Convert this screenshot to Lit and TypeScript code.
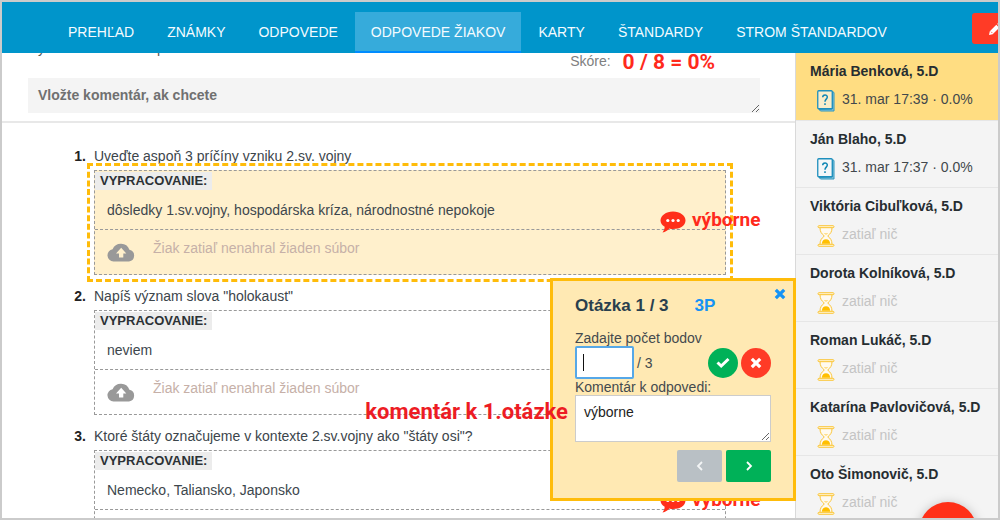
import { LitElement, html, css, svg, nothing } from "lit";
import { customElement, property } from "lit/decorators.js";
import { classMap } from "lit/directives/class-map.js";

interface Student {
  name: string;
  meta?: string;
}

interface Question {
  title: string;
  answer: string;
  upload?: string;
  note?: string;
}

const NAV = ["PREHĽAD", "ZNÁMKY", "ODPOVEDE", "ODPOVEDE ŽIAKOV", "KARTY", "ŠTANDARDY", "STROM ŠTANDARDOV"];

const STUDENTS: Student[] = [
  { name: "Mária Benková, 5.D", meta: "31. mar 17:39 · 0.0%" },
  { name: "Ján Blaho, 5.D", meta: "31. mar 17:37 · 0.0%" },
  { name: "Viktória Cibuľková, 5.D" },
  { name: "Dorota Kolníková, 5.D" },
  { name: "Roman Lukáč, 5.D" },
  { name: "Katarína Pavlovičová, 5.D" },
  { name: "Oto Šimonovič, 5.D" },
];

const QUESTIONS: Question[] = [
  {
    title: "Uveďte aspoň 3 príčíny vzniku 2.sv. vojny",
    answer: "dôsledky 1.sv.vojny, hospodárska kríza, národnostné nepokoje",
    upload: "Žiak zatiaľ nenahral žiaden súbor",
    note: "výborne",
  },
  {
    title: 'Napíš význam slova "holokaust"',
    answer: "neviem",
    upload: "Žiak zatiaľ nenahral žiaden súbor",
  },
  {
    title: 'Ktoré štáty označujeme v kontexte 2.sv.vojny ako "štáty osi"?',
    answer: "Nemecko, Taliansko, Japonsko",
    note: "výborne",
  },
];

const cloudIcon = svg`<svg width="28" height="20" viewBox="0 0 28 20" aria-hidden="true">
  <path fill="#999" fill-rule="evenodd" d="M6.500 19.500A6.200 6.200 0 0 1 5.600 7.200A9 9 0 0 1 22.400 7.700A6 6 0 0 1 22 19.500ZM12 15.500h4.300v-4h3L14.200 5.800L9 11.500h3Z"/></svg>`;

const bubbleIcon = svg`<svg width="26" height="22" viewBox="0 0 26 22" aria-hidden="true">
  <path fill="#ff2f1a" d="M13 .5C20 .5 25.500 4.500 25.500 9.500S20 18 13 18C11.500 18 10.500 17.900 9.300 17.500C7.500 19.500 5.500 21 2.500 21.500C4 19.500 4.500 18 4.700 15.800C2 14 .5 12 .5 9.500C.5 4.500 6 .5 13 .5Z"/>
  <g fill="#fff"><circle cx="7.800" cy="9.500" r="1.600"/><circle cx="13" cy="9.500" r="1.600"/><circle cx="18.200" cy="9.500" r="1.600"/></g></svg>`;

const bookIcon = svg`<svg width="18" height="22" viewBox="0 0 18 22" aria-hidden="true">
  <path d="M2 19.500L3.500 21H17V2.500L15.500 1.500V19Z" fill="#8cc6dc" stroke="#2d97bf"/>
  <rect x=".75" y=".75" width="14.500" height="18" rx="1" fill="#f4f9fb" fill-opacity=".6" stroke="#1e8fbd" stroke-width="1.300"/>
  <path d="M5.700 7.200C5.800 4.200 10.300 4.200 10.300 7.100C10.300 9.100 8 9.200 8 11.700M8 13.200v1.700" fill="none" stroke="#0f86b5" stroke-width="1.500"/></svg>`;

const hourglassIcon = svg`<svg width="18" height="22" viewBox="0 0 18 22" aria-hidden="true">
  <g fill="#fff6d8" stroke="#fbc638">
  <path d="M3 2.500C3 7 4.500 8.500 7.300 11C4.500 13.500 3 15 3 19.500H15C15 15 13.500 13.500 10.700 11C13.500 8.500 15 7 15 2.500Z" fill="#fffaf0"/>
  <rect x="1" y=".7" width="16" height="2" rx="1"/><rect x="1" y="19.300" width="16" height="2" rx="1"/></g>
  <path d="M4.800 18.700C5 15.800 6.800 14.300 9 14.300S13 15.800 13.200 18.700Z" fill="#ffbf00"/>
  <path d="M7.500 8.500Q9 9.700 10.500 8.500" fill="none" stroke="#ffcf4a"/></svg>`;

const cross = (color: string, size: number) => svg`<svg width=${size} height=${size} viewBox="0 0 10 10" aria-hidden="true">
  <path d="M1.500 1.500L8.500 8.500M8.500 1.500L1.500 8.500" stroke=${color} stroke-width="2.700"/></svg>`;

@customElement("nav-bar")
export class NavBar extends LitElement {
  static styles = css`
    :host { display: flex; align-items: flex-end; justify-content: space-between; height: 51px; background: #0095cb; position: relative; z-index: 5; }
    .tabs { display: flex; gap: 1px; padding-left: 50px; }
    .tab { box-sizing: border-box; height: 41px; padding: 0 16px; line-height: 40px; color: #f4fbff; text-decoration: none; white-space: nowrap; }
    .tab.active { background: #36abdb; border-bottom: 2px solid #008cff; }
    .edit { align-self: flex-start; margin-top: 11px; width: 26px; height: 31px; padding: 0 0 0 16px; border: 0; border-radius: 3px 0 0 3px; background: #ff3b26; overflow: hidden; display: flex; align-items: center; }
    .edit svg { flex: none; }
  `;
  render() {
    return html`
      <nav class="tabs">
        ${NAV.map((t) => html`<a class=${classMap({ tab: true, active: t === "ODPOVEDE ŽIAKOV" })} href="#">${t}</a>`)}
      </nav>
      <button class="edit" aria-label="Upraviť">
        <svg width="14" height="14" viewBox="0 0 14 14" aria-hidden="true">
          <path fill="#fff" d="M1 13L1.800 9.300L8.300 2.800L11.200 5.700L4.700 12.200ZM9.200 1.900L10.500 .6Q11.200 0 11.900 .6L13.400 2.100Q14 2.800 13.400 3.500L12.100 4.800Z"/>
          <path d="M3 9.700L4.400 11.100" stroke="#ff3b26" stroke-width=".8"/>
        </svg>
      </button>
    `;
  }
}

@customElement("question-item")
export class QuestionItem extends LitElement {
  @property({ attribute: false }) question!: Question;
  @property({ type: Number }) number = 1;
  @property({ type: Boolean }) current = false;

  static styles = css`
    :host { display: grid; grid-template-columns: 20px 1fr; column-gap: 8px; line-height: 20px; }
    .number { text-align: right; font-weight: bold; color: #222; }
    .title { color: #3c454b; }
    .box { grid-column: 2; position: relative; box-sizing: border-box; height: 105px; margin-top: 4px; border: 1px dashed #999; }
    .box.current { background: #fff0cc; outline: 3px dashed #ffbc0a; outline-offset: 4px; }
    .label { display: block; width: fit-content; margin: 1px 0 0; padding: 0 5px; line-height: 18px; font-size: 13px; font-weight: bold; color: #2b3135; background: #ececec; }
    .answer { margin: 0; padding: 10px 12px 9px; color: #3d474d; border-bottom: 1px dashed #999; }
    .upload { display: flex; gap: 18px; padding: 8px 12px; color: #c6b0a8; }
    .upload svg { margin-top: 4px; }
    .note { position: absolute; left: calc(100% - 65px); top: 40px; display: flex; gap: 6px; white-space: nowrap; font: bold 19px/18px Roboto, sans-serif; color: #ff2a1c; }
  `;
  render() {
    const q = this.question;
    return html`
      <span class="number">${this.number}.</span>
      <span class="title">${q.title}</span>
      <div class=${classMap({ box: true, current: this.current })}>
        <span class="label">VYPRACOVANIE:</span>
        <p class="answer">${q.answer}</p>
        ${q.upload ? html`<div class="upload">${cloudIcon}<span>${q.upload}</span></div>` : nothing}
        ${q.note ? html`<div class="note">${bubbleIcon}<span>${q.note}</span></div>` : nothing}
      </div>
    `;
  }
}

@customElement("grade-panel")
export class GradePanel extends LitElement {
  static styles = css`
    :host { display: block; box-sizing: border-box; width: 246px; padding: 12px 22px 16px; border: 3px solid #ffbc0a; background: #ffe9b3; color: #444a4e; }
    .title { margin: 0 0 11px; display: flex; gap: 26px; font-size: 17px; line-height: 26px; color: #293f4e; }
    .points { color: #1593f5; }
    .close { position: absolute; top: 5px; right: 5px; padding: 2px; border: 0; background: none; display: flex; }
    .label { display: block; line-height: 16px; }
    .row { display: flex; align-items: center; gap: 3px; height: 33px; }
    .field { position: relative; display: flex; }
    .score { box-sizing: border-box; width: 59px; height: 33px; border: 2px solid #56a8e8; border-radius: 2px; padding: 0 7px; background: #fff; font: inherit; outline: 0; }
    .caret { position: absolute; left: 8px; top: 8px; width: 1px; height: 17px; background: #111; }
    .max { flex: 1; }
    .round { width: 30px; height: 30px; border: 0; border-radius: 50%; padding: 0; display: flex; align-items: center; justify-content: center; }
    .yes, .next { background: #00b158; }
    .no { background: #ff3b26; }
    .comment { display: block; box-sizing: border-box; width: 100%; height: 47px; padding: 8px; border: 1px solid #ccc; background: #fff; font: inherit; line-height: 16px; color: #222; outline: 0; resize: vertical; }
    .pager { display: flex; justify-content: flex-end; gap: 4px; margin-top: 8px; }
    .step { width: 45px; height: 32px; padding: 0; border: 0; border-radius: 2px; display: flex; align-items: center; justify-content: center; }
    .prev { background: #b9c0c5; }
    .hint { position: absolute; right: 225px; top: 119px; white-space: nowrap; font: bold 22px/24px Roboto, sans-serif; color: #ed1c24; }
  `;
  render() {
    return html`
      <h2 class="title"><span>Otázka 1 / 3</span><span class="points">3P</span></h2>
      <button class="close" aria-label="Zavrieť">${cross("#1593f5", 12)}</button>
      <label class="label" for="score">Zadajte počet bodov</label>
      <div class="row">
        <span class="field"><input class="score" id="score" type="text" /><span class="caret"></span></span>
        <span class="max">/ 3</span>
        <button class="round yes" aria-label="Správne">
          <svg width="14" height="12" viewBox="0 0 14 12" aria-hidden="true"><path d="M1.500 5.500L5.200 9L12.500 2" fill="none" stroke="#fff" stroke-width="3"/></svg>
        </button>
        <button class="round no" aria-label="Nesprávne">${cross("#fff", 12)}</button>
      </div>
      <label class="label" for="comment">Komentár k odpovedi:</label>
      <textarea class="comment" id="comment" .value=${"výborne"}></textarea>
      <div class="pager">
        <button class="step prev" aria-label="Predchádzajúca">
          <svg width="8" height="10" viewBox="0 0 8 10" aria-hidden="true"><path d="M6 1L2 5L6 9" fill="none" stroke="#f3f5f6" stroke-width="1.800"/></svg>
        </button>
        <button class="step next" aria-label="Ďalšia">
          <svg width="8" height="10" viewBox="0 0 8 10" aria-hidden="true"><path d="M2 1L6 5L2 9" fill="none" stroke="#fff" stroke-width="1.800"/></svg>
        </button>
      </div>
      <div class="hint">komentár k 1.otázke</div>
    `;
  }
}

@customElement("student-list")
export class StudentList extends LitElement {
  static styles = css`
    :host { display: block; border-left: 1px solid #d9d9d9; background: #f4f4f4; }
    .list { margin: 0; padding: 0; list-style: none; }
    .item { box-sizing: border-box; height: 67px; padding: 8px 0 0 14px; border-bottom: 1px solid #e6e6e6; white-space: nowrap; }
    .item.selected { height: 68px; background: #ffdd82; }
    .name { line-height: 20px; font-weight: bold; color: #262d31; }
    .meta { display: flex; align-items: flex-start; gap: 7px; margin: 7px 0 0 7px; line-height: 22px; color: #42484c; }
    .meta svg { margin-top: 2px; }
    .meta.empty { color: #c4c4c4; }
  `;
  render() {
    return html`<ul class="list">
      ${STUDENTS.map(
        (s, i) => html`<li class=${classMap({ item: true, selected: i === 0 })}>
          <div class="name">${s.name}</div>
          <div class=${classMap({ meta: true, empty: !s.meta })}>
            ${s.meta ? bookIcon : hourglassIcon}<span>${s.meta ?? "zatiaľ nič"}</span>
          </div>
        </li>`
      )}
    </ul>`;
  }
}

@customElement("app-root")
export class AppRoot extends LitElement {
  static styles = css`
    :host { display: flex; flex-direction: column; box-sizing: border-box; height: 100vh; overflow: hidden; position: relative; border: 2px solid #cbcbcb; background: #fff; font: 14px "Liberation Sans", Arial, sans-serif; }
    .body { flex: 1; min-height: 0; display: grid; grid-template-columns: 1fr 203px; }
    .main { position: relative; z-index: 2; min-width: 0; min-height: 0; }
    .students { overflow: hidden; min-height: 0; }
    .summary { padding: 0 35px 8px 26px; border-bottom: 2px solid #e8e8e8; }
    .line { display: flex; height: 25px; line-height: 16px; color: #808080; }
    .cut { flex: 1; display: flex; gap: 112px; margin-top: -13px; padding-left: 10px; color: #555; }
    .score { display: flex; gap: 12px; padding-right: 45px; white-space: nowrap; }
    .value { font: bold 21px/18px Roboto, sans-serif; color: #ff2a1c; }
    .remark { display: block; box-sizing: border-box; width: 100%; height: 35px; padding: 9px 10px; border: 0; background: #f4f4f4; font: bold 14px/16px "Liberation Sans", Arial, sans-serif; outline: 0; resize: vertical; }
    .remark::placeholder { color: #707070; opacity: 1; }
    .questions { display: flex; flex-direction: column; gap: 11px; padding: 23px 69px 0 64px; }
    .panel { position: absolute; top: 225px; right: -1px; z-index: 3; }
    .fab { position: absolute; right: 21px; bottom: -42px; z-index: 4; width: 58px; height: 58px; padding: 0; border: 0; border-radius: 50%; background: #ff2f17; box-shadow: 0 2px 12px #0004; }
  `;
  render() {
    return html`
      <nav-bar></nav-bar>
      <div class="body">
        <main class="main">
          <section class="summary">
            <div class="line">
              <div class="cut"><span>y</span><span>p</span></div>
              <div class="score"><span>Skóre:</span><span class="value">0 / 8 = 0%</span></div>
            </div>
            <textarea class="remark" aria-label="Komentár" placeholder="Vložte komentár, ak chcete"></textarea>
          </section>
          <section class="questions">
            ${QUESTIONS.map((q, i) => html`<question-item .question=${q} .number=${i + 1} .current=${i === 0}></question-item>`)}
          </section>
          <grade-panel class="panel"></grade-panel>
        </main>
        <student-list class="students"></student-list>
      </div>
      <button class="fab" aria-label="Pridať"></button>
    `;
  }
}
